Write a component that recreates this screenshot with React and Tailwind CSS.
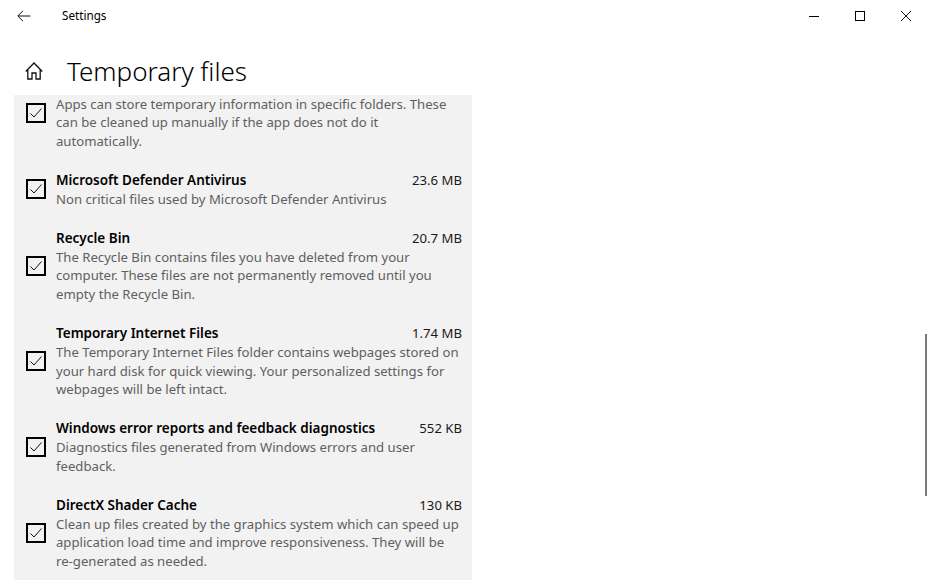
const rows = [
  { name: '\u00a0', size: '', lines: ['Apps can store temporary information in specific folders. These', 'can be cleaned up manually if the app does not do it', 'automatically.'] },
  { name: 'Microsoft Defender Antivirus', size: '23.6 MB', lines: ['Non critical files used by Microsoft Defender Antivirus'] },
  { name: 'Recycle Bin', size: '20.7 MB', lines: ['The Recycle Bin contains files you have deleted from your', 'computer. These files are not permanently removed until you', 'empty the Recycle Bin.'] },
  { name: 'Temporary Internet Files', size: '1.74 MB', lines: ['The Temporary Internet Files folder contains webpages stored on', 'your hard disk for quick viewing. Your personalized settings for', 'webpages will be left intact.'] },
  { name: 'Windows error reports and feedback diagnostics', size: '552 KB', lines: ['Diagnostics files generated from Windows errors and user', 'feedback.'] },
  { name: 'DirectX Shader Cache', size: '130 KB', lines: ['Clean up files created by the graphics system which can speed up', 'application load time and improve responsiveness. They will be', 're-generated as needed.'] },
];

const Row = ({ row }) => (
  <div className="flex items-center pl-3 pr-2.5">
    <div className="w-5 h-5 border-2 border-black flex items-center justify-center shrink-0 mr-2.5 -mt-px">
      <svg width="14" height="14" viewBox="0 0 14 14" fill="none" stroke="#111" strokeWidth="1">
        <path d="M1.500 7.500l3.500 3.500 7.500-8.500" />
      </svg>
    </div>
    <div className="flex-1 min-w-0 text-[13.15px] leading-[18.67px]">
      <div className="flex justify-between">
        <span className="font-semibold text-black text-[13.5px]">{row.name}</span>
        <span className="text-[#1a1a1a]">{row.size}</span>
      </div>
      {row.lines.map((line) => (
        <div key={line} className="text-[#5f5f5f] whitespace-nowrap">{line}</div>
      ))}
    </div>
  </div>
);

export default function App() {
  return (
    <div className="h-[584px] w-[929px] bg-white relative overflow-hidden font-['Noto_Sans','Open_Sans',sans-serif] text-black">
      <div className="h-[32px] flex items-center">
        <button className="w-12 h-[30px] flex items-center justify-center">
          <svg width="14" height="12" viewBox="0 0 14 12" fill="none" stroke="#111" strokeWidth="1">
            <path d="M13.500 6H1M6 .8L.8 6 6 11.200" />
          </svg>
        </button>
        <span className="ml-3.5 text-[11.7px]">Settings</span>
        <div className="ml-auto flex">
          <div className="w-[46px] h-[30px] flex items-center justify-center">
            <div className="w-2.5 h-px bg-black" />
          </div>
          <div className="w-[46px] h-[30px] flex items-center justify-center">
            <div className="w-2.5 h-2.5 border border-black" />
          </div>
          <div className="w-[46px] h-[30px] flex items-center justify-center">
            <svg width="10" height="10" viewBox="0 0 10 10" fill="none" stroke="#111" strokeWidth="1">
              <path d="M0 0l10 10M10 0L0 10" />
            </svg>
          </div>
        </div>
      </div>
      <div className="h-[63px] flex items-center pl-[25px] pt-[14px]">
        <svg width="18" height="18" viewBox="0 0 18 18" fill="none" stroke="#111" strokeWidth="1.300">
          <path d="M.7 9.500L9 1l8.300 8.500M2.800 7.500V17H7v-6h4v6h4.200V7.500" />
        </svg>
        <h1 className="ml-[24px] text-[26px] font-light leading-none">Temporary files</h1>
      </div>
      <div className="ml-3.5 w-[458px] h-[485px] bg-[#f2f2f2] overflow-hidden">
        <div className="-mt-[19px] flex flex-col gap-[20.5px]">
          {rows.map((row, i) => (
            <Row key={i} row={row} />
          ))}
        </div>
      </div>
      <div className="absolute left-[925px] top-[334px] w-0.5 h-[162px] bg-[#7a7a7a]" />
    </div>
  );
}
